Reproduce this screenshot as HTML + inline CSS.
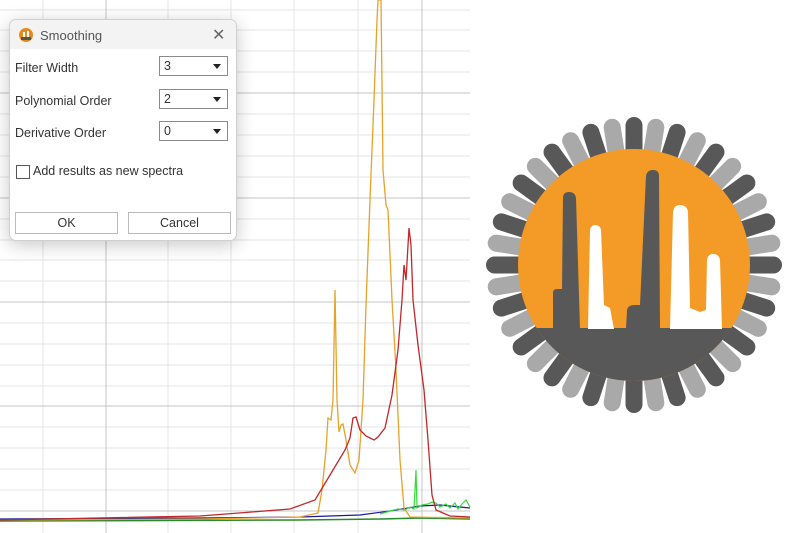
<!DOCTYPE html>
<html><head><style>
body{margin:0;width:800px;height:533px;background:#fff;overflow:hidden;position:relative;font-family:"Liberation Sans",sans-serif}
.dlg{position:absolute;left:9px;top:19px;width:226px;height:220px;background:#fff;border:1px solid #cfcfcf;border-radius:7px;box-shadow:0 4px 18px rgba(0,0,0,.22);font-size:12.5px;color:#333;overflow:hidden}
.title{height:29px;background:#f3f3f3;position:relative}
.title span{position:absolute;left:30px;top:8px;color:#555;font-size:13px}
.lbl{position:absolute;left:5px}
.sel{position:absolute;left:149px;width:69px;height:20px;border:1px solid #8a8a8a;box-sizing:border-box}
.sel span{position:absolute;left:4px;top:2px}
.sel i{position:absolute;right:6px;top:7px;border:4px solid transparent;border-top:5px solid #222;border-bottom:0}
.btn{position:absolute;top:192px;height:22px;border:1px solid #bbb;box-sizing:border-box;text-align:center;line-height:20px;background:#fff}
</style></head><body>
<svg width="800" height="533" style="position:absolute;left:0;top:0">
<g stroke="#e4e4e4" stroke-width="1">
<line x1="0" y1="10" x2="470" y2="10"/><line x1="0" y1="30" x2="470" y2="30"/><line x1="0" y1="51" x2="470" y2="51"/><line x1="0" y1="72" x2="470" y2="72"/>
<line x1="0" y1="114" x2="470" y2="114"/><line x1="0" y1="135" x2="470" y2="135"/><line x1="0" y1="156" x2="470" y2="156"/><line x1="0" y1="177" x2="470" y2="177"/>
<line x1="0" y1="219" x2="470" y2="219"/><line x1="0" y1="240" x2="470" y2="240"/><line x1="0" y1="260" x2="470" y2="260"/><line x1="0" y1="281" x2="470" y2="281"/>
<line x1="0" y1="323" x2="470" y2="323"/><line x1="0" y1="344" x2="470" y2="344"/><line x1="0" y1="365" x2="470" y2="365"/><line x1="0" y1="386" x2="470" y2="386"/>
<line x1="0" y1="427" x2="470" y2="427"/><line x1="0" y1="448" x2="470" y2="448"/><line x1="0" y1="469" x2="470" y2="469"/><line x1="0" y1="490" x2="470" y2="490"/>
<line x1="43" y1="0" x2="43" y2="533"/><line x1="168" y1="0" x2="168" y2="533"/><line x1="231" y1="0" x2="231" y2="533"/><line x1="294" y1="0" x2="294" y2="533"/><line x1="358" y1="0" x2="358" y2="533"/>
</g>
<g stroke="#c4c4c4" stroke-width="1">
<line x1="0" y1="93" x2="470" y2="93"/><line x1="0" y1="198" x2="470" y2="198"/><line x1="0" y1="302" x2="470" y2="302"/><line x1="0" y1="406" x2="470" y2="406"/><line x1="0" y1="511" x2="470" y2="511"/>
<line x1="106" y1="0" x2="106" y2="533"/><line x1="422" y1="0" x2="422" y2="533"/>
</g>
<polyline fill="none" stroke="#1a1aa0" stroke-width="1.2" points="0,519 200,518 300,517 360,515 390,511 420,506 440,505 470,508"/>
<polyline fill="none" stroke="#2a8a2a" stroke-width="1.5" points="0,521 300,520 380,519 420,518 470,519"/>
<polyline fill="none" stroke="#33dd33" stroke-width="1.2" points="380,514 390,511 398,509 405,510 410,507 414,509 416,470 417,508 422,505 428,504 432,502 436,503 440,507 446,504 450,508 455,503 458,509 462,504 466,500 470,507"/>
<polyline fill="none" stroke="#e6a22a" stroke-width="1.3" points="0,520 200,519 300,517 318,513 322,490 326,450 328,418 331,420 333,400 335,290 337,400 339,432 341,425 343,424 346,440 350,465 355,473 359,460 363,400 366,305 370,200 374,100 377,20 378,0 381,0 383,170 386,205 388,210 392,300 396,370 400,460 404,508 410,517 470,518"/>
<polyline fill="none" stroke="#c0282a" stroke-width="1.3" points="0,520 200,516 290,509 315,500 330,475 345,450 350,438 353,418 356,417 360,430 366,436 374,440 378,437 385,428 392,395 398,350 402,300 404,265 406,280 409,228 411,245 413,300 418,345 424,390 428,440 432,495 436,510 450,516 470,517"/>
</svg>
<svg width="800" height="533" style="position:absolute;left:0;top:0" id="logo">
<g transform="translate(634,265)" id="pet"></g>
<clipPath id="cc"><circle cx="634" cy="265" r="116"/></clipPath>
<circle cx="634" cy="265" r="116" fill="#f39a27"/>
<g clip-path="url(#cc)" fill="#585858">
<rect x="500" y="328" width="270" height="60"/>
<path d="M553,329 L553,293 Q553,289 557,289 L562,289 L563,198 Q563,192 569,192 Q575,192 576,198 L580,329 Z"/>
<path d="M626,329 L627,310 Q628,305 634,305 L640,305 L646,176 Q647,170 653,170 Q659,170 659,176 L660,329 Z"/>
</g>
<g fill="#fff">
<path d="M588,329 L590,230 Q591,225 595,225 Q600,225 601,230 L604,305 L610,308 L614,329 Z"/>
<path d="M670,329 L673,212 Q674,205 680,205 Q687,205 688,212 L690,308 L700,312 L706,310 L707,260 Q708,254 713,254 Q719,254 720,260 L722,329 Z"/>
</g>
</svg>
<script>
var g=document.getElementById('pet'),n=40,s='';
for(var i=0;i<n;i++){var a=i*360/n;s+='<rect x="-8.5" y="-148" width="17" height="54" rx="8.5" fill="'+(i%2?'#a9a9a9':'#585858')+'" transform="rotate('+a+')"/>';}
g.innerHTML=s;
</script>
<div class="dlg">
<div class="title"><svg width="14" height="14" style="position:absolute;left:9px;top:8px"><circle cx="7" cy="7" r="7" fill="#e8891c"/><rect x="4" y="4" width="2" height="6" fill="#fff"/><rect x="8" y="3" width="2" height="7" fill="#fff"/><rect x="2" y="9" width="10" height="3" fill="#555"/></svg><span>Smoothing</span><span style="left:202px;top:5px;font-size:16px;color:#666">✕</span></div>
<div class="lbl" style="top:41px">Filter Width</div><div class="sel" style="top:36px"><span>3</span><i></i></div>
<div class="lbl" style="top:74px">Polynomial Order</div><div class="sel" style="top:69px"><span>2</span><i></i></div>
<div class="lbl" style="top:106px">Derivative Order</div><div class="sel" style="top:101px"><span>0</span><i></i></div>
<div style="position:absolute;left:6px;top:145px;width:12px;height:12px;border:1px solid #555"></div>
<div class="lbl" style="left:23px;top:144px">Add results as new spectra</div>
<div class="btn" style="left:5px;width:103px">OK</div>
<div class="btn" style="left:118px;width:103px">Cancel</div>
</div>
</body></html>
